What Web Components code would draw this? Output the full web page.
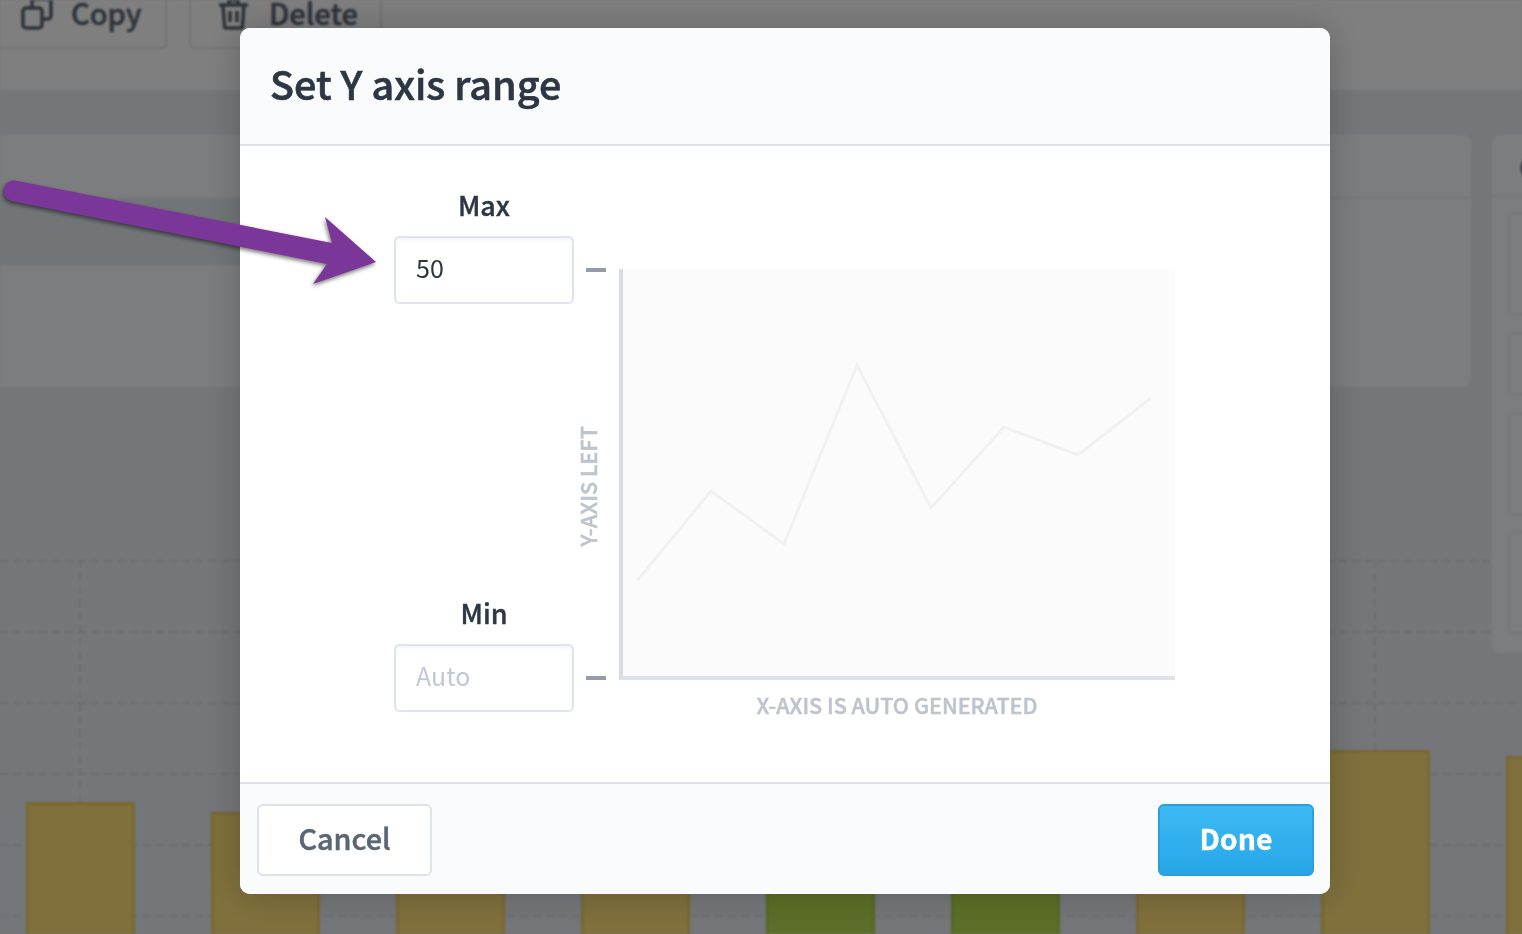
<!DOCTYPE html>
<html lang="en">
<head>
<meta charset="utf-8">
<title>Set Y axis range</title>
<style>
  html, body { margin: 0; height: 100%; overflow: hidden; background: #e9edf3; }
  body { font-family: "Noto Sans CJK SC", "Noto Sans", sans-serif; }
</style>
</head>
<body>

<page-backdrop></page-backdrop>

<range-dialog>
  <span slot="title">Set Y axis range</span>
  <axis-field slot="max" label="Max">50</axis-field>
  <axis-field slot="min" label="Min" empty>Auto</axis-field>
  <chart-preview slot="chart"></chart-preview>
  <dialog-button slot="cancel">Cancel</dialog-button>
  <dialog-button slot="done" primary>Done</dialog-button>
</range-dialog>

<callout-arrow></callout-arrow>

<script>
class PageBackdrop extends HTMLElement {
  constructor() {
    super();
    this.attachShadow({ mode: 'open' });
    // bar tops measured from the top of the chart area (y=560)
    const bars = [
      [242, 'y'], [252, 'y'], [270, 'y'], [270, 'y'], [290, 'g'],
      [290, 'g'], [270, 'y'], [190, 'y'], [196, 'y']
    ];
    const barHtml = bars.map(b => `<div class="bar ${b[1]}" style="margin-top:${b[0]}px"></div>`).join('');
    let grid = '';
    for (let y = 0; y < 374; y += 71) grid += `<line x1="0" x2="1522" y1="${y + 1}" y2="${y + 1}"/>`;
    for (let x = 80; x < 1522; x += 185) grid += `<line x1="${x}" x2="${x}" y1="0" y2="374"/>`;

    this.shadowRoot.innerHTML = `
      <style>
        :host {
          display: block;
          position: fixed;
          inset: 0;
          overflow: hidden;
          background: #e9edf3;
        }
        .page { filter: blur(1.2px); height: 100%; }
        .scrim { position: absolute; inset: 0; background: rgba(0,0,0,.5); }

        .toolbar {
          height: 90px;
          background: #fff;
          display: flex;
          gap: 22px;
          align-items: flex-start;
          overflow: hidden;
        }
        .tool {
          flex: none;
          box-sizing: border-box;
          height: 49px;
          border: 2px solid #e6e6e6;
          border-top: 0;
          display: flex;
          gap: 18px;
          align-items: flex-end;
          color: #5a6675;
          font-size: 29px;
          font-weight: 500;
          -webkit-text-stroke: .5px currentColor;
          line-height: 40px;
          white-space: nowrap;
        }
        .tool span { margin-bottom: 15px; }
        .tool svg { flex: none; margin-bottom: 17px; }
        .tool.copy { width: 167px; padding-left: 21px; border-left: 0; border-radius: 0 0 6px 0; }
        .tool.del { width: 193px; padding-left: 27px; border-radius: 0 0 6px 6px; gap: 20px; }

        .upper {
          display: flex;
          gap: 21px;
          padding-top: 45px;
          height: 470px;
          box-sizing: border-box;
          align-items: flex-start;
          position: relative;
          z-index: 1;
        }
        .card {
          flex: none;
          width: 1471px;
          height: 252px;
          box-sizing: border-box;
          background: #f9fafd;
          border-radius: 0 8px 8px 0;
          padding-top: 62px;
        }
        .card .line { height: 2px; background: #eef0f3; }
        .card .row { width: 640px; height: 66px; background: #e4ebef; }

        .panel {
          flex: none;
          width: 120px;
          height: 518px;
          box-sizing: border-box;
          background: #f9fafd;
          border-radius: 8px;
        }
        .panel .head {
          height: 50px;
          border-bottom: 2px solid #eef0f3;
          padding: 10px 0 0 27px;
          color: #5a6675;
          font-size: 30px;
          line-height: 42px;
        }
        .panel .tile {
          margin-left: 16px;
          width: 90px;
          border: 2px solid #eaecee;
          border-radius: 6px;
          box-sizing: border-box;
        }

        .plot { position: relative; height: 374px; }
        .plot svg { position: absolute; inset: 0; }
        .plot line { stroke: #d6dae0; stroke-width: 2; stroke-dasharray: 8 5; }
        .bars {
          position: relative;
          display: flex;
          gap: 76px;
          padding-left: 26px;
          height: 374px;
        }
        .bar {
          flex: none;
          width: 109px;
          box-sizing: border-box;
          border: 3px solid;
          border-bottom: 0;
        }
        .bar.y { background: #ffe178; border-color: #f2d062; }
        .bar.g { background: #b9dd50; border-color: #add146; }
      </style>
      <div class="page">
        <div class="toolbar">
          <div class="tool copy">
            <svg width="32" height="32" viewBox="0 0 32 32" fill="none" stroke="#5a6675" stroke-width="3.5" stroke-linejoin="round">
              <rect x="2" y="10" width="19" height="20" rx="3"/>
              <path d="M11 10V4a3 3 0 0 1 3-3h13a3 3 0 0 1 3 3v14a3 3 0 0 1-3 3h-6"/>
            </svg>
            <span>Copy</span>
          </div>
          <div class="tool del">
            <svg width="31" height="32" viewBox="0 0 31 32" fill="none" stroke="#5a6675" stroke-width="3.5" stroke-linejoin="round">
              <path d="M1 7h29M11 7V2h9v5M5 7l1.5 21a2 2 0 0 0 2 2h14a2 2 0 0 0 2-2L26 7M12 13v11M19 13v11"/>
            </svg>
            <span>Delete</span>
          </div>
        </div>
        <div class="upper">
          <div class="card">
            <div class="line"></div>
            <div class="row"></div>
          </div>
          <div class="panel">
            <div class="head">C</div>
            <div class="tile" style="height:103px;margin-top:15px"></div>
            <div class="tile" style="height:63px;margin-top:17px"></div>
            <div class="tile" style="height:103px;margin-top:18px"></div>
            <div class="tile" style="height:103px;margin-top:15px"></div>
          </div>
        </div>
        <div class="plot">
          <svg width="1522" height="374">${grid}</svg>
          <div class="bars">${barHtml}</div>
        </div>
      </div>
      <div class="scrim"></div>
    `;
  }
}

class RangeDialog extends HTMLElement {
  constructor() {
    super();
    this.attachShadow({ mode: 'open' });
    this.shadowRoot.innerHTML = `
      <style>
        :host {
          display: flex;
          flex-direction: column;
          position: fixed;
          left: 240px;
          top: 28px;
          width: 1090px;
          height: 866px;
          background: #fff;
          border-radius: 10px;
          overflow: hidden;
          box-shadow: 0 0 36px rgba(0,0,0,.22);
        }
        header {
          flex: none;
          box-sizing: border-box;
          height: 118px;
          padding: 28px 31px 0 30px;
          background: #fafbfd;
          border-bottom: 2px solid #dde2ec;
          color: #2d3744;
          font-size: 39.6px;
          font-weight: 500;
          line-height: 54px;
          -webkit-text-stroke: .6px currentColor;
        }
        main {
          flex: 1;
          display: flex;
          align-items: flex-start;
          padding: 44px 0 0 154px;
        }
        .fields {
          flex: none;
          height: 522px;
          display: flex;
          flex-direction: column;
          justify-content: space-between;
        }
        .ticks {
          flex: none;
          box-sizing: border-box;
          width: 20px;
          height: 412px;
          margin: 78px 13px 0 12px;
          display: flex;
          flex-direction: column;
          align-items: flex-start;
          justify-content: space-between;
        }
        .tick { width: 20px; height: 4px; background: #929cab; }
        .y-label {
          writing-mode: vertical-rl;
          transform: rotate(180deg);
          margin: 24px 0 0 -8px;
          color: #bec4ce;
          font-size: 21.8px;
          font-weight: 500;
          line-height: 20px;
          -webkit-text-stroke: .5px currentColor;
          white-space: nowrap;
        }
        ::slotted([slot="chart"]) { margin-top: 79px; }
        footer {
          flex: none;
          box-sizing: border-box;
          height: 112px;
          padding: 20px 16px 0;
          background: #fafbfd;
          border-top: 2px solid #dde2ec;
          display: flex;
          justify-content: space-between;
          align-items: flex-start;
        }
      </style>
      <header><slot name="title"></slot></header>
      <main>
        <div class="fields">
          <slot name="max"></slot>
          <slot name="min"></slot>
        </div>
        <div class="ticks">
          <div class="tick"></div>
          <div class="y-label">Y-AXIS LEFT</div>
          <div class="tick"></div>
        </div>
        <slot name="chart"></slot>
      </main>
      <footer>
        <slot name="cancel"></slot>
        <slot name="done"></slot>
      </footer>
    `;
  }
}

class AxisField extends HTMLElement {
  constructor() {
    super();
    this.attachShadow({ mode: 'open' });
    this.shadowRoot.innerHTML = `
      <style>
        :host { display: block; width: 180px; }
        label {
          display: block;
          height: 46px;
          text-align: center;
          color: #2d3744;
          font-size: 27px;
          font-weight: 500;
          line-height: 30px;
          -webkit-text-stroke: .4px currentColor;
        }
        .box {
          box-sizing: border-box;
          height: 68px;
          padding-left: 20px;
          border: 2px solid #dfe4ee;
          border-radius: 5px;
          background: #fff;
          box-shadow: inset 0 2px 3px rgba(222,227,236,.45);
          color: #2d3744;
          font-size: 25px;
          line-height: 58px;
        }
        :host([empty]) .box { color: #bfc8d6; }
      </style>
      <label></label>
      <div class="box"><slot></slot></div>
    `;
    this.shadowRoot.querySelector('label').textContent = this.getAttribute('label');
  }
}

class ChartPreview extends HTMLElement {
  constructor() {
    super();
    this.attachShadow({ mode: 'open' });
    this.shadowRoot.innerHTML = `
      <style>
        :host { display: block; flex: none; width: 556px; }
        .plot {
          box-sizing: border-box;
          height: 411px;
          background: #fbfbfc;
          border-left: 4px solid #d6dbe4;
          border-bottom: 4px solid #dde1ea;
        }
        svg { display: block; }
        .caption {
          margin-top: 10px;
          text-align: center;
          color: #bec4ce;
          font-size: 21.5px;
          font-weight: 500;
          line-height: 30px;
          -webkit-text-stroke: .5px currentColor;
          white-space: nowrap;
        }
      </style>
      <div class="plot">
        <svg width="552" height="407" viewBox="623 269 552 407" fill="none">
          <polyline points="637,581 711,491 784,544 857,365 931,508 1004,427 1078,455 1151,398"
                    stroke="#f0f1f3" stroke-width="3"/>
        </svg>
      </div>
      <div class="caption">X-AXIS IS AUTO GENERATED</div>
    `;
  }
}

class DialogButton extends HTMLElement {
  constructor() {
    super();
    this.attachShadow({ mode: 'open' });
    this.shadowRoot.innerHTML = `
      <style>
        :host {
          display: block;
          box-sizing: border-box;
          width: 175px;
          height: 72px;
          margin-left: 1px;
          border: 2px solid #dde2ec;
          border-radius: 6px;
          background: #fff;
          color: #5a6675;
          text-align: center;
          font-size: 28.8px;
          font-weight: 500;
          line-height: 64px;
          -webkit-text-stroke: .5px currentColor;
        }
        :host([primary]) {
          width: 156px;
          margin-left: 0;
          border-color: #2a9fdb;
          background: linear-gradient(#3dbaf4, #27a6e7);
          color: #fff;
          font-size: 28.5px;
          font-weight: 700;
          line-height: 64px;
          -webkit-text-stroke: .3px currentColor;
        }
      </style>
      <slot></slot>
    `;
  }
}

class CalloutArrow extends HTMLElement {
  constructor() {
    super();
    this.attachShadow({ mode: 'open' });
    this.shadowRoot.innerHTML = `
      <style>
        :host { display: block; position: fixed; left: 0; top: 170px; width: 400px; height: 130px; }
        svg { display: block; overflow: visible; filter: drop-shadow(-1px 2px 2px rgba(0,0,0,.55)); }
      </style>
      <svg width="400" height="130" viewBox="0 170 400 130">
        <path fill="#7b3699" d="M15 180.5L332 243L325 217L376 262L313 284L327 264L11 201A10.5 10.5 0 0 1 15 180.5Z"/>
      </svg>
    `;
  }
}

customElements.define('page-backdrop', PageBackdrop);
customElements.define('range-dialog', RangeDialog);
customElements.define('axis-field', AxisField);
customElements.define('chart-preview', ChartPreview);
customElements.define('dialog-button', DialogButton);
customElements.define('callout-arrow', CalloutArrow);
</script>
</body>
</html>
